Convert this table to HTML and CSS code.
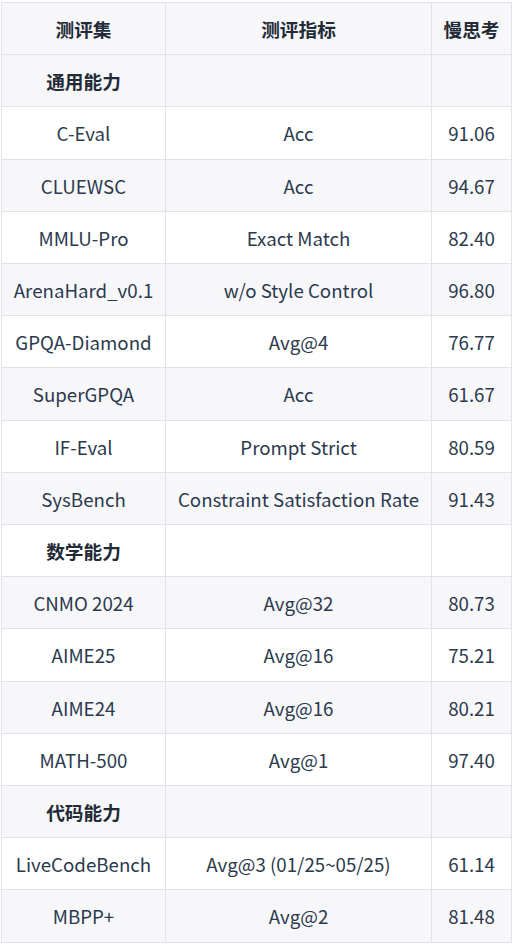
FILE: index.html
```html
<!DOCTYPE html>
<html lang="zh">
<head>
<meta charset="utf-8">
<link rel="stylesheet" href="styles.css">
</head>
<body>
<table class="bench">
  <colgroup><col class="c1"><col class="c2"><col class="c3"></colgroup>
  <thead>
    <tr><th>测评集</th><th>测评指标</th><th>慢思考</th></tr>
  </thead>
  <tbody>
    <tr class="cat"><td>通用能力</td><td></td><td></td></tr>
    <tr><td>C-Eval</td><td>Acc</td><td>91.06</td></tr>
    <tr><td>CLUEWSC</td><td>Acc</td><td>94.67</td></tr>
    <tr><td>MMLU-Pro</td><td>Exact Match</td><td>82.40</td></tr>
    <tr><td>ArenaHard_v0.1</td><td>w/o Style Control</td><td>96.80</td></tr>
    <tr><td>GPQA-Diamond</td><td>Avg@4</td><td>76.77</td></tr>
    <tr><td>SuperGPQA</td><td>Acc</td><td>61.67</td></tr>
    <tr><td>IF-Eval</td><td>Prompt Strict</td><td>80.59</td></tr>
    <tr><td>SysBench</td><td>Constraint Satisfaction Rate</td><td>91.43</td></tr>
    <tr class="cat"><td>数学能力</td><td></td><td></td></tr>
    <tr><td>CNMO 2024</td><td>Avg@32</td><td>80.73</td></tr>
    <tr><td>AIME25</td><td>Avg@16</td><td>75.21</td></tr>
    <tr><td>AIME24</td><td>Avg@16</td><td>80.21</td></tr>
    <tr><td>MATH-500</td><td>Avg@1</td><td>97.40</td></tr>
    <tr class="cat"><td>代码能力</td><td></td><td></td></tr>
    <tr><td>LiveCodeBench</td><td>Avg@3 (01/25~05/25)</td><td>61.14</td></tr>
    <tr><td>MBPP+</td><td>Avg@2</td><td>81.48</td></tr>
  </tbody>
</table>
</body>
</html>
```
FILE: styles.css
```css
html, body {
  margin: 0;
  padding: 0;
  background: #ffffff;
}
body {
  font-family: "Noto Sans CJK SC", "Noto Sans", sans-serif;
  font-size: 18.7px;
  color: #2c3a4e;
}
.bench {
  border-collapse: collapse;
  margin: 2px 0 0 1px;
  table-layout: fixed;
  width: 510px;
}
.c1 { width: 164px; }
.c2 { width: 266px; }
.c3 { width: 80px; }
.bench th,
.bench td {
  border: 1px solid #e2e2ea;
  padding: 12px 0;
  line-height: 27.2px;
  text-align: center;
  white-space: nowrap;
}
.bench th {
  font-weight: 700;
  background: #f7f7fa;
  color: #222a36;
}
.bench tbody tr:nth-child(odd) td {
  background: #f7f7fa;
}
.bench .cat td {
  font-weight: 700;
  color: #222a36;
}
```
